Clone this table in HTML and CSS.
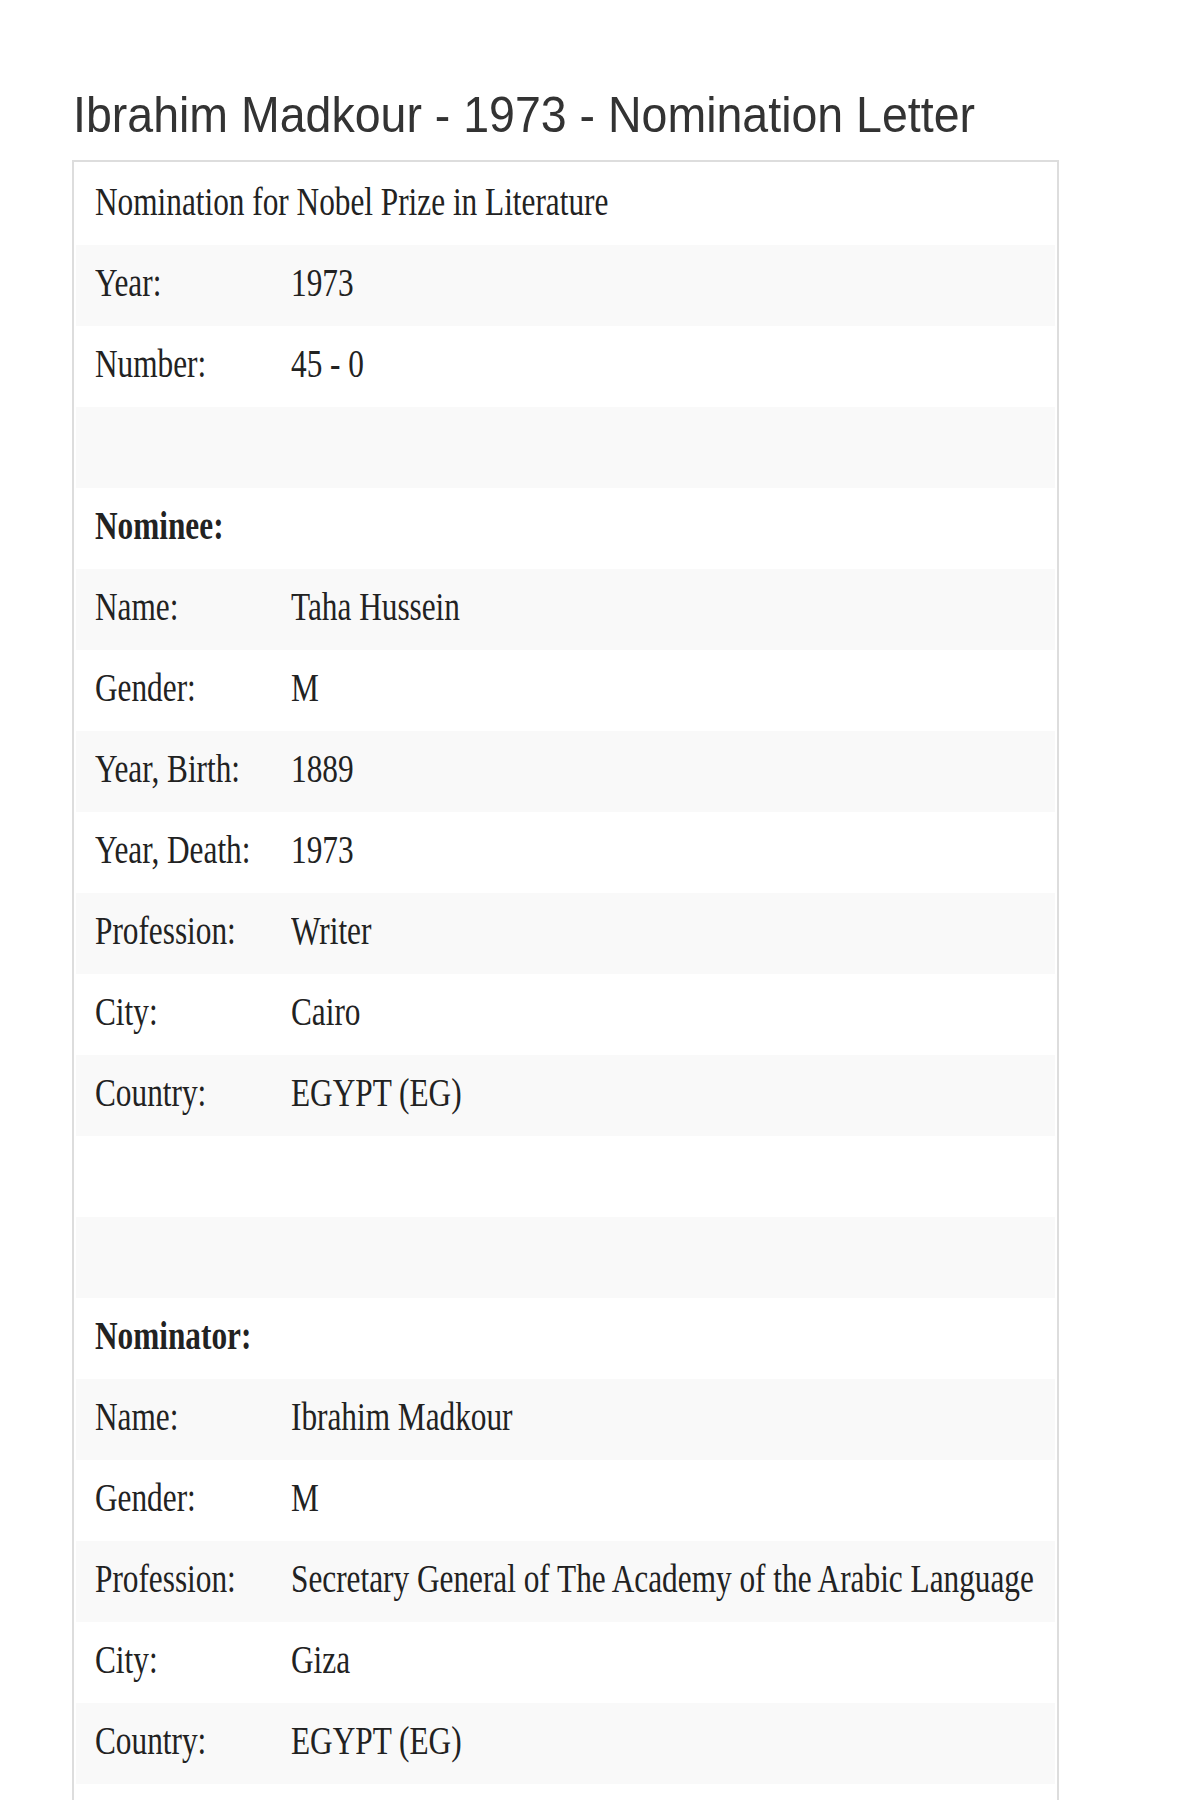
FILE: index.html
```html
<!DOCTYPE html>
<html lang="en">
<head>
<meta charset="utf-8">
<title>Ibrahim Madkour - 1973 - Nomination Letter</title>
<link rel="stylesheet" href="styles.css">
</head>
<body>
<main class="page">
  <h1 class="title"><span class="squeeze-title">Ibrahim Madkour - 1973 - Nomination Letter</span></h1>
  <div class="panel">
    <table class="details">
      <colgroup><col class="col-label"><col class="col-value"></colgroup>
      <tbody>
        <tr><td colspan="2"><span class="sq">Nomination for Nobel Prize in Literature</span></td></tr>
        <tr><td><span class="sq">Year:</span></td><td><span class="sq">1973</span></td></tr>
        <tr><td><span class="sq">Number:</span></td><td><span class="sq">45 - 0</span></td></tr>
        <tr><td colspan="2">&nbsp;</td></tr>
        <tr><td colspan="2"><span class="sq strong">Nominee:</span></td></tr>
        <tr><td><span class="sq">Name:</span></td><td><span class="sq">Taha Hussein</span></td></tr>
        <tr><td><span class="sq">Gender:</span></td><td><span class="sq">M</span></td></tr>
        <tr><td><span class="sq">Year, Birth:</span></td><td><span class="sq">1889</span></td></tr>
        <tr><td><span class="sq">Year, Death:</span></td><td><span class="sq">1973</span></td></tr>
        <tr><td><span class="sq">Profession:</span></td><td><span class="sq">Writer</span></td></tr>
        <tr><td><span class="sq">City:</span></td><td><span class="sq">Cairo</span></td></tr>
        <tr><td><span class="sq">Country:</span></td><td><span class="sq">EGYPT (EG)</span></td></tr>
        <tr><td colspan="2">&nbsp;</td></tr>
        <tr><td colspan="2">&nbsp;</td></tr>
        <tr><td colspan="2"><span class="sq strong">Nominator:</span></td></tr>
        <tr><td><span class="sq">Name:</span></td><td><span class="sq">Ibrahim Madkour</span></td></tr>
        <tr><td><span class="sq">Gender:</span></td><td><span class="sq">M</span></td></tr>
        <tr><td><span class="sq">Profession:</span></td><td><span class="sq">Secretary General of The Academy of the Arabic Language</span></td></tr>
        <tr><td><span class="sq">City:</span></td><td><span class="sq">Giza</span></td></tr>
        <tr><td><span class="sq">Country:</span></td><td><span class="sq">EGYPT (EG)</span></td></tr>
        <tr><td colspan="2">&nbsp;</td></tr>
        <tr><td colspan="2">&nbsp;</td></tr>
      </tbody>
    </table>
  </div>
</main>
</body>
</html>
```
FILE: styles.css
```css
html, body {
  margin: 0;
  padding: 0;
  background: #ffffff;
}

body {
  color: #222222;
  font-family: "Liberation Serif", "Times New Roman", serif;
}

.page {
  padding: 88px 0 0 72px;
  width: 987px;
}

.title {
  margin: 0 0 17px 0;
  height: 55px;
  font-family: "Liberation Sans", Arial, sans-serif;
  font-weight: normal;
  font-size: 50px;
  line-height: 55px;
  color: #333333;
  white-space: nowrap;
}

.squeeze-title {
  display: inline-block;
  transform: scaleX(0.93);
  transform-origin: left center;
  margin-left: 1px;
}

.panel {
  border: 2px solid #dddddd;
  padding: 2px;
}

.details {
  width: 100%;
  border-collapse: collapse;
  table-layout: fixed;
}

.col-label {
  width: 196px;
}

.details td {
  padding: 15px 0 20px 19px;
  height: 46px;
  line-height: 46px;
  font-size: 40px;
  white-space: nowrap;
  overflow: visible;
  vertical-align: top;
}

.details tr:nth-child(even) td {
  background: #f9f9f9;
}

.sq {
  display: inline-block;
  transform: scaleX(0.782);
  transform-origin: left center;
}

.strong {
  font-weight: bold;
}
```
